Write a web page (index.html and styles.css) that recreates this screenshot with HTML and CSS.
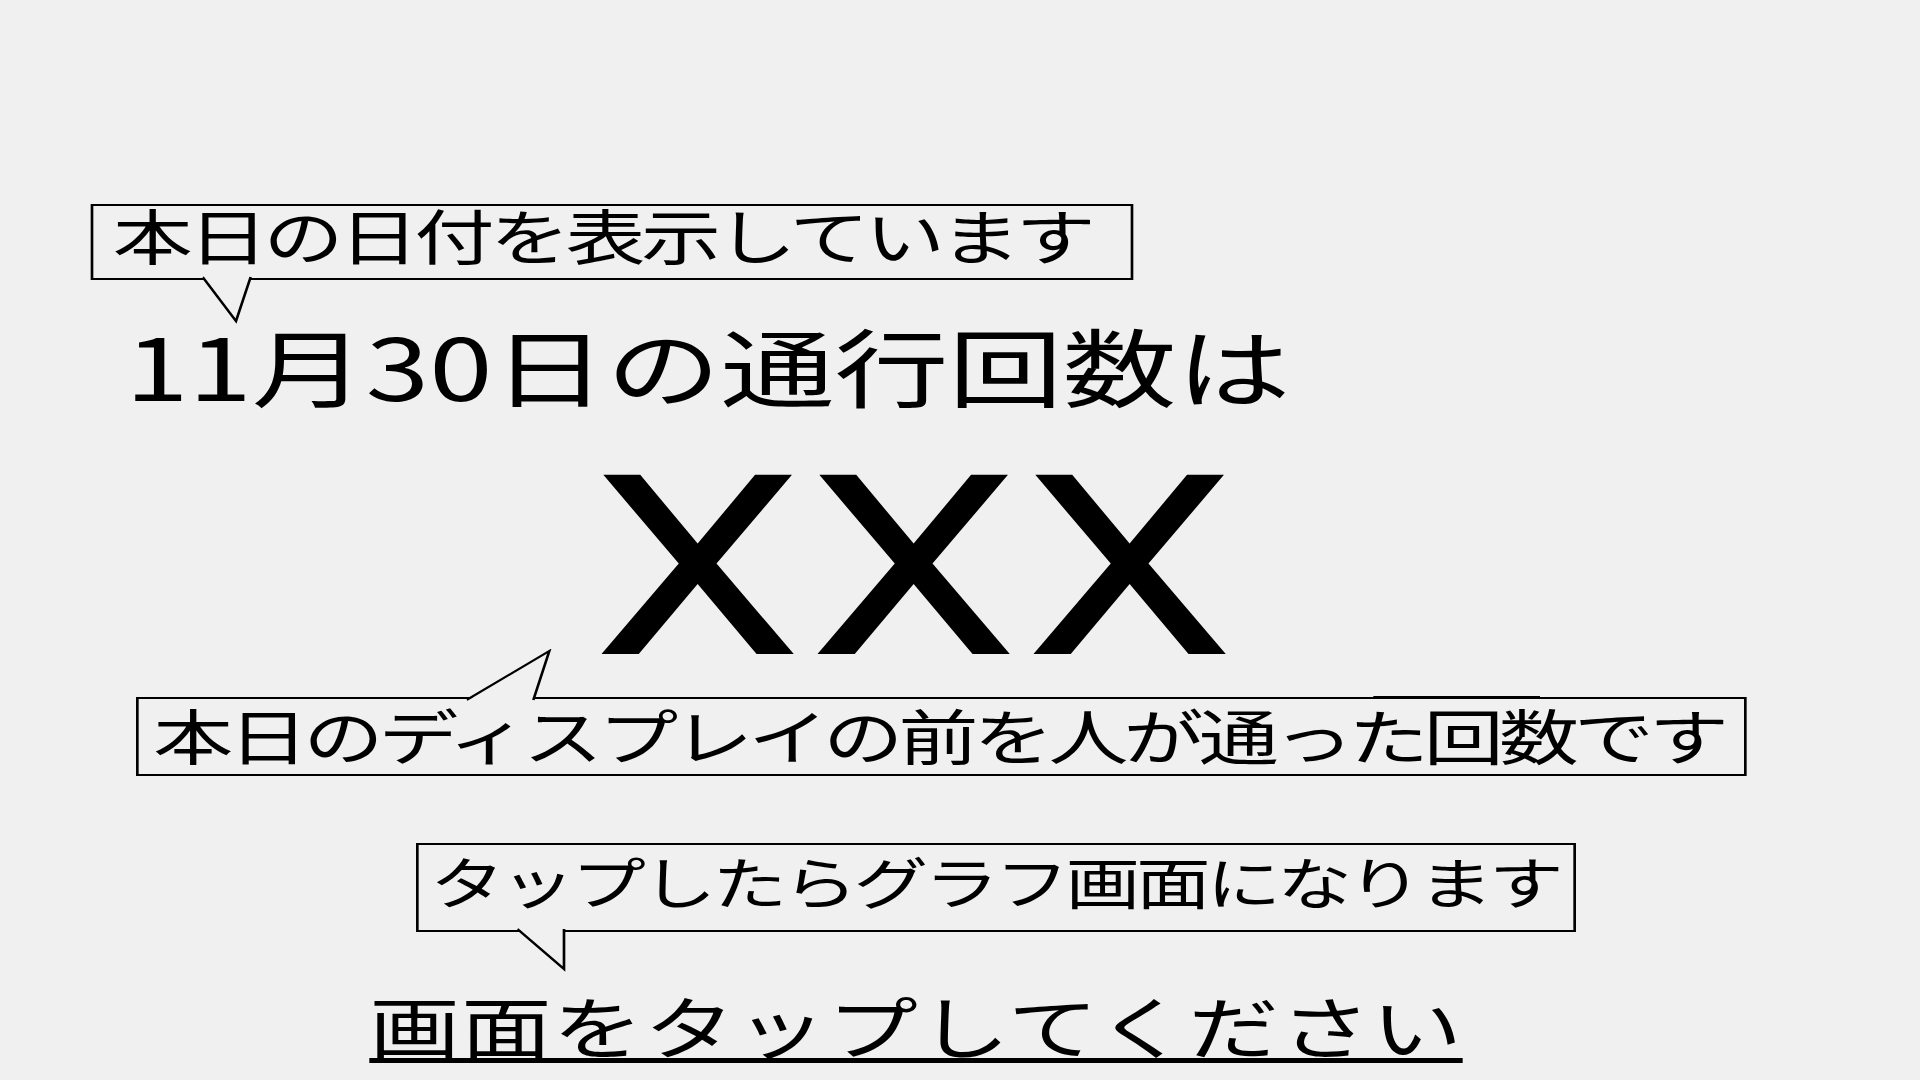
FILE: index.html
```html
<!DOCTYPE html>
<html lang="ja">
<head>
<meta charset="utf-8">
<title>通行回数</title>
<link rel="stylesheet" href="styles.css">
</head>
<body>
<div class="screen">
  <div class="callout callout-date">
    <span class="callout-text">本日の日付を表示しています</span>
    <svg class="tail tail-date" width="40" height="50" viewBox="0 0 40 50">
      <polygon points="0,0 25,45 36,0" fill="#f0f0f0"/>
      <polyline points="0,1 25,45 36,1" fill="none" stroke="#000" stroke-width="2"/>
    </svg>
  </div>
  <div class="headline">11月30日の通行回数は</div>
  <div class="count">XXX</div>
  <div class="callout callout-count">
    <span class="callout-text">本日のディスプレイの前を人が通った回数です</span>
    <svg class="tail tail-count" width="66" height="52" viewBox="0 0 66 52">
      <polygon points="0,52 62,2 50,52" fill="#f0f0f0"/>
      <polyline points="0,51 62,2 50,51" fill="none" stroke="#000" stroke-width="2"/>
    </svg>
  </div>
  <div class="callout callout-tap">
    <span class="callout-text">タップしたらグラフ画面になります</span>
    <svg class="tail tail-tap" width="40" height="44" viewBox="0 0 40 44">
      <polygon points="0,0 35,41 35,0" fill="#f0f0f0"/>
      <polyline points="0,1 35,41 35,1" fill="none" stroke="#000" stroke-width="2"/>
    </svg>
  </div>
  <div class="tap-line"><span class="tap-text">画面をタップしてください</span></div>
</div>
</body>
</html>
```
FILE: styles.css
```css
html, body {
  margin: 0;
  padding: 0;
  background: #f0f0f0;
  overflow: hidden;
}

.screen {
  width: 1440px;
  transform: scaleX(1.33333);
  transform-origin: 0 0;
  display: flex;
  flex-direction: column;
  align-items: flex-start;
  font-family: "Noto Sans CJK JP", "Liberation Sans", sans-serif;
  color: #000;
}

.screen > * {
  flex-shrink: 0;
}

.callout {
  position: relative;
  box-sizing: border-box;
  border: 2px solid #000;
  white-space: nowrap;
}

.callout-text {
  display: block;
  line-height: 0.9;
}

.callout-date {
  margin-top: 204px;
  margin-left: 67.5px;
  height: 76px;
  padding: 1px 29px 0 15px;
  font-size: 60px;
  letter-spacing: -3.4px;
}

.headline {
  margin-top: 42px;
  margin-left: 94px;
  font-size: 85.5px;
  line-height: 85px;
  white-space: nowrap;
}

.count {
  margin-top: 61px;
  margin-left: 444px;
  font-family: Roboto, "Liberation Sans", sans-serif;
  font-size: 252px;
  line-height: 200px;
  letter-spacing: 4px;
}

.callout-count {
  margin-top: 29px;
  margin-left: 102px;
  height: 79px;
  padding: 7.6px 15px 0 11px;
  font-size: 60px;
  letter-spacing: -3.7px;
}

.callout-count::before {
  content: "";
  position: absolute;
  left: 926px;
  width: 125px;
  top: -3px;
  height: 1px;
  background: #000;
}

.callout-tap {
  margin-top: 67px;
  margin-left: 312px;
  height: 89px;
  padding: 10px 10.5px 0 8.5px;
  font-size: 56px;
  letter-spacing: -3.05px;
}

.tail {
  position: absolute;
  display: block;
}

.tail-date {
  left: 82px;
  top: 100%;
  margin-top: -2px;
}

.tail-count {
  left: 246px;
  bottom: 100%;
  margin-bottom: -2px;
}

.tail-tap {
  left: 74px;
  top: 100%;
  margin-top: -2px;
}

.tap-line {
  display: flex;
  margin-top: 59px;
  margin-left: 277px;
  font-size: 68px;
  letter-spacing: 0.7px;
  white-space: nowrap;
}

.tap-text {
  display: block;
  box-sizing: content-box;
  line-height: 68px;
  height: 67px;
  border-bottom: 5px solid #000;
}
```
